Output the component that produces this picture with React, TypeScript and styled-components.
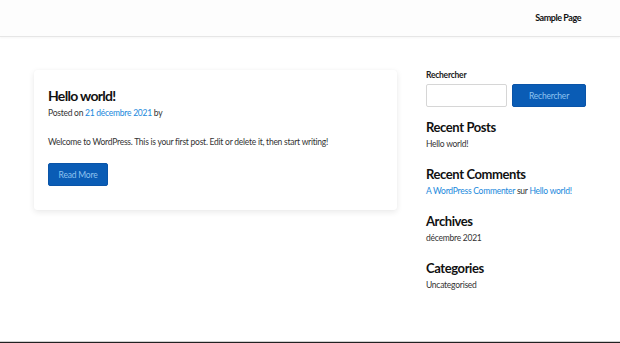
import React from "react";
import styled, { createGlobalStyle } from "styled-components";

const Global = createGlobalStyle`
  html, body { margin: 0; padding: 0; background: #fff; }
  body { font-family: Lato, "Open Sans", sans-serif; color: #333; }
  * { box-sizing: border-box; }
`;

const Header = styled.header`
  height: 37px;
  background: #fdfdfd;
  border-bottom: 1px solid #e6e6e6;
  box-shadow: 0 1px 2px rgba(0,0,0,0.04);
  display: flex;
  justify-content: flex-end;
  align-items: center;
  padding: 0 39px 2px 0;
`;

const NavLink = styled.a`
  font-size: 9px;
  font-weight: 700;
  color: #111;
  text-decoration: none;
  letter-spacing: -0.45px;
`;

const Main = styled.main`
  height: 304px;
  display: grid;
  grid-template-columns: 363px 160px;
  column-gap: 29px;
  padding: 33px 34px 0;
  align-items: start;
`;

const Card = styled.article`
  background: #fff;
  border-radius: 3px;
  box-shadow: 0 2px 6px rgba(0,0,0,0.09), 0 0 1px rgba(0,0,0,0.06);
  padding: 16px 14px 24px;
`;

const PostTitle = styled.h2`
  margin: 0;
  font-size: 14px;
  font-weight: 700;
  color: #111;
  letter-spacing: -0.7px;
  line-height: 20px;
`;

const Meta = styled.div`
  font-size: 8.5px;
  color: #333;
  line-height: 14px;
  margin-top: 0;
  letter-spacing: -0.25px;
`;

const Link = styled.a`
  color: #1a88dc;
  text-decoration: none;
`;

const Excerpt = styled.p`
  margin: 15px 0 0;
  font-size: 8.5px;
  line-height: 14px;
  color: #333;
  letter-spacing: -0.25px;
`;

const Button = styled.button<{ $w?: number }>`
  font-family: inherit;
  background: #0a5cb5;
  color: #8ec3f0;
  border: 1px solid #0a54a8;
  border-radius: 2px;
  font-size: 8.5px;
  letter-spacing: -0.2px;
  height: 23px;
  width: ${(p) => (p.$w ? `${p.$w}px` : "auto")};
  padding: 0;
  cursor: pointer;
`;

const ReadMore = styled(Button)`
  margin-top: 14px;
  display: block;
`;

const Sidebar = styled.aside`
  display: flex;
  flex-direction: column;
`;

const Label = styled.label`
  font-size: 8.5px;
  font-weight: 700;
  color: #222;
  line-height: 12px;
  margin-top: -1px;
  letter-spacing: -0.25px;
`;

const SearchRow = styled.div`
  display: flex;
  gap: 5px;
  margin-top: 3px;
`;

const Input = styled.input`
  width: 81px;
  height: 23px;
  border: 1px solid #d6d6d6;
  border-radius: 2px;
  background: #fff;
`;

const WidgetTitle = styled.h3<{ $mt: number }>`
  margin: ${(p) => p.$mt}px 0 0;
  font-size: 13px;
  font-weight: 700;
  color: #111;
  line-height: 18px;
  letter-spacing: -0.4px;
`;

const WidgetText = styled.div`
  font-size: 8.5px;
  color: #333;
  line-height: 12px;
  margin-top: 2px;
  letter-spacing: -0.25px;
`;

const Footer = styled.footer`
  height: 8px;
  border-top: 1px solid #cfcfcf;
  background: #222;
`;

export default function App() {
  return (
    <>
      <Global />
      <Header>
        <NavLink href="#">Sample Page</NavLink>
      </Header>
      <Main>
        <Card>
          <PostTitle>Hello world!</PostTitle>
          <Meta>
            Posted on <Link href="#">21 décembre 2021</Link> by
          </Meta>
          <Excerpt>
            Welcome to WordPress. This is your first post. Edit or delete it, then start writing!
          </Excerpt>
          <ReadMore $w={60}>Read More</ReadMore>
        </Card>
        <Sidebar>
          <Label>Rechercher</Label>
          <SearchRow>
            <Input />
            <Button $w={74}>Rechercher</Button>
          </SearchRow>
          <WidgetTitle $mt={11}>Recent Posts</WidgetTitle>
          <WidgetText>Hello world!</WidgetText>
          <WidgetTitle $mt={15}>Recent Comments</WidgetTitle>
          <WidgetText>
            <Link href="#">A WordPress Commenter</Link> sur <Link href="#">Hello world!</Link>
          </WidgetText>
          <WidgetTitle $mt={15}>Archives</WidgetTitle>
          <WidgetText>décembre 2021</WidgetText>
          <WidgetTitle $mt={15}>Categories</WidgetTitle>
          <WidgetText>Uncategorised</WidgetText>
        </Sidebar>
      </Main>
      <Footer />
    </>
  );
}
